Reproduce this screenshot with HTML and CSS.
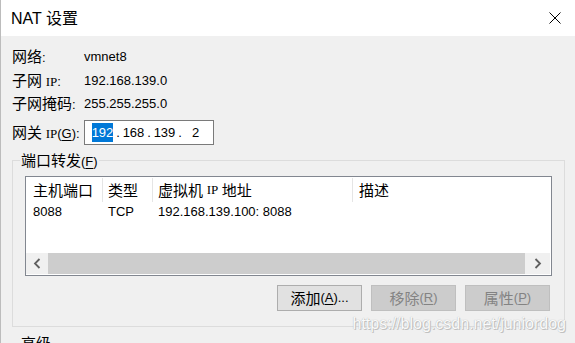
FILE: index.html
```html
<!DOCTYPE html>
<html lang="zh-CN">
<head>
<meta charset="utf-8">
<title>NAT 设置</title>
<link rel="stylesheet" href="styles.css">
</head>
<body>
<div class="win">
  <div class="titlebar">
    <span class="title">NAT <span class="zh">设置</span></span>
    <svg class="close" width="12" height="12" viewBox="0 0 12 12"><path d="M0.5 0.5L11.5 11.5M11.5 0.5L0.5 11.5" stroke="#000" stroke-width="1" fill="none"/></svg>
  </div>
  <div class="body">
    <div class="row r1"><span class="label"><span class="zh">网络</span>:</span><span class="value">vmnet8</span></div>
    <div class="row r2"><span class="label"><span class="zh">子网</span> <span class="ip">IP</span>:</span><span class="value">192.168.139.0</span></div>
    <div class="row r3"><span class="label"><span class="zh">子网掩码</span>:</span><span class="value">255.255.255.0</span></div>
    <div class="row r4">
      <span class="label"><span class="zh">网关</span> <span class="ip">IP</span>(<u>G</u>):</span>
      <div class="ipbox">
        <span class="seg"><span class="sel">192</span></span><span class="dot">.</span><span class="seg">168</span><span class="dot">.</span><span class="seg">139</span><span class="dot">.</span><span class="seg">2</span>
      </div>
    </div>

    <fieldset class="group">
      <legend class="legend"><span class="zh">端口转发</span>(<u>F</u>)</legend>
      <div class="group-inner">
        <div class="list">
          <div class="list-head">
            <div class="col c1"><span class="zh">主机端口</span></div>
            <div class="col c2"><span class="zh">类型</span></div>
            <div class="col c3"><span class="zh">虚拟机</span>&nbsp;<span class="ip">IP</span>&nbsp;<span class="zh">地址</span></div>
            <div class="col c4"><span class="zh">描述</span></div>
          </div>
          <div class="list-row">
            <div class="col c1">8088</div>
            <div class="col c2">TCP</div>
            <div class="col c3">192.168.139.100: 8088</div>
            <div class="col c4"></div>
          </div>
          <div class="hscroll">
            <div class="sb-btn sb-left"><svg width="8" height="11" viewBox="0 0 8 11"><path d="M6.5 1L2 5.5L6.5 10" stroke="#606060" stroke-width="1.8" fill="none"/></svg></div>
            <div class="sb-thumb"></div>
            <div class="sb-btn sb-right"><svg width="8" height="11" viewBox="0 0 8 11"><path d="M1.5 1L6 5.5L1.5 10" stroke="#606060" stroke-width="1.8" fill="none"/></svg></div>
          </div>
        </div>
        <div class="buttons">
          <button class="btn"><span class="zh">添加</span>(<u>A</u>)...</button>
          <button class="btn disabled"><span class="zh">移除</span>(<u>R</u>)</button>
          <button class="btn disabled"><span class="zh">属性</span>(<u>P</u>)</button>
        </div>
      </div>
    </fieldset>

    <fieldset class="group adv">
      <legend class="legend"><span class="zh">高级</span></legend>
      <div class="adv-inner"></div>
    </fieldset>
  </div>
  <div class="watermark">https://blog.csdn.net/juniordog</div>
</div>
</body>
</html>
```

FILE: styles.css
```css
html, body {
  margin: 0;
  padding: 0;
  overflow: hidden;
}

body {
  font-family: "Liberation Sans", "Noto Sans CJK SC", sans-serif;
  font-size: 13px;
  color: #000;
  background: #f0f0f0;
}

.zh {
  font-family: "Noto Sans CJK SC", sans-serif;
  font-size: 15px;
}

.ip {
  font-family: "Liberation Serif", serif;
  font-size: 13px;
}

u {
  text-decoration: underline;
  text-underline-offset: 2px;
}

.win {
  position: relative;
  width: 575px;
  height: 343px;
  box-sizing: border-box;
  overflow: hidden;
  background: #f0f0f0;
  border-left: 1px solid #bcbcbc;
}

.titlebar {
  height: 36px;
  background: #fff;
  display: flex;
  align-items: center;
  justify-content: space-between;
  padding: 0 14px 0 10px;
}

.title {
  font-size: 16px;
  line-height: 20px;
}

.title .zh {
  font-size: 16px;
}

.close {
  display: block;
}

.body {
  padding: 9px 10px 0 11px;
}

.row {
  display: flex;
  align-items: center;
  line-height: 18px;
  white-space: nowrap;
}

.r1 { height: 24px; }
.r2 { height: 23px; }
.r3 { height: 24px; }
.r4 { height: 27px; margin-top: 3px; }

.label {
  width: 72px;
  flex: none;
}

.ipbox {
  width: 130px;
  height: 25px;
  box-sizing: border-box;
  border: 1px solid #7a7a7a;
  background: #fff;
  display: flex;
  align-items: center;
  padding-left: 5px;
}

.seg {
  width: 25px;
  text-align: center;
  line-height: 19px;
}

.dot {
  width: 6px;
  text-align: center;
  line-height: 19px;
}

.sel {
  display: inline-block;
  background: #0078d7;
  color: #fff;
  line-height: 19px;
}

.group {
  margin: 4px 0 0 0;
  padding: 6px 0 15px 0;
  border: 1px solid #dcdcdc;
  min-width: 0;
}

.legend {
  padding: 0 1px;
  margin-left: 7px;
  line-height: 20px;
  height: 20px;
}

.group-inner {
  padding: 0 12px;
}

.list {
  height: 100px;
  box-sizing: border-box;
  border: 1px solid #828790;
  background: #fff;
  display: flex;
  flex-direction: column;
}

.list-head {
  display: flex;
  height: 25px;
  box-sizing: border-box;
  padding-top: 1px;
}

.list-row {
  display: flex;
  height: 20px;
}

.col {
  box-sizing: border-box;
  display: flex;
  align-items: center;
  padding-left: 5px;
  white-space: nowrap;
  line-height: 18px;
  border-right: 1px solid transparent;
}

.list-head .col {
  border-right-color: #e5e5e5;
}

.list-head .c4 {
  border-right: none;
}

.c1 { width: 77px; padding-left: 7px; }
.c2 { width: 50px; }
.c3 { width: 200px; }
.c4 { flex: 1; padding-left: 6px; }

.hscroll {
  margin-top: auto;
  margin-bottom: 1px;
  margin-right: 1px;
  height: 21px;
  display: flex;
}

.sb-btn {
  background: #f0f0f0;
  display: flex;
  align-items: center;
  justify-content: center;
}

.sb-left { width: 22px; }
.sb-right { width: 25px; }

.sb-btn svg {
  display: block;
}

.sb-thumb {
  flex: 1;
  background: #cdcdcd;
}

.buttons {
  display: flex;
  justify-content: flex-end;
  gap: 9px;
  margin-top: 9px;
  padding-right: 2px;
}

.btn {
  width: 85px;
  height: 26px;
  box-sizing: border-box;
  border: 1px solid #adadad;
  background: #e1e1e1;
  padding: 0;
  margin: 0;
  font-family: inherit;
  font-size: 13px;
  color: #000;
  display: flex;
  align-items: center;
  justify-content: center;
  line-height: 18px;
}

.btn.disabled {
  background: #cccccc;
  border-color: #bfbfbf;
  color: #838383;
}

.adv {
  margin-top: 6px;
}

.adv-inner {
  height: 40px;
}

.watermark {
  position: absolute;
  right: 9px;
  top: 315px;
  font-family: "Liberation Sans", sans-serif;
  font-size: 16px;
  line-height: 18px;
  color: #fafafa;
  text-shadow: 0 0 1px #a8a8a8, 1px 1px 0 #c4c4c4;
  white-space: nowrap;
}
```
